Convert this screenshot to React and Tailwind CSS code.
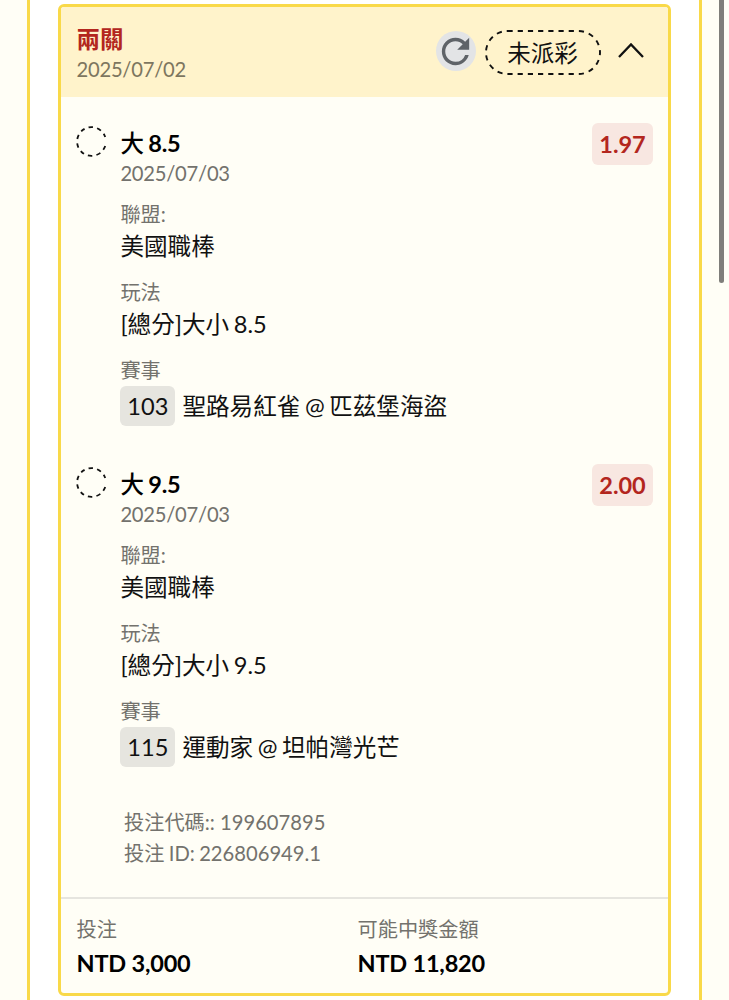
import React from 'react';
import { MdRefresh } from 'react-icons/md';

const legs = [
  {
    pick: '大',
    line: '8.5',
    date: '2025/07/03',
    odds: '1.97',
    league: '美國職棒',
    play: '[總分]大小 8.5',
    gameNo: '103',
    match: '聖路易紅雀 @ 匹茲堡海盜',
  },
  {
    pick: '大',
    line: '9.5',
    date: '2025/07/03',
    odds: '2.00',
    league: '美國職棒',
    play: '[總分]大小 9.5',
    gameNo: '115',
    match: '運動家 @ 坦帕灣光芒',
  },
];

const Field = ({ label, children }) => (
  <div className="mb-3">
    <p className="text-[20.2px] leading-[30px] text-[#73726d]">{label}</p>
    <div className="text-[23.6px] leading-[35px] pb-px">{children}</div>
  </div>
);

const Leg = ({ leg }) => (
  <section className="flex h-[341px] items-start">
    <svg className="mt-[13px] shrink-0" width="31" height="31" viewBox="0 0 31 31" fill="none">
      <path d="M29.2 19.95A14.4 14.4 0 1 1 29.2 11.05" stroke="#111" strokeWidth="1.8" strokeDasharray="4.4 4.15" />
    </svg>
    <div className="ml-[13.4px] mt-[15px] flex-1">
      <h3 className="text-[23.5px] leading-[30px] font-medium text-black">
        {leg.pick} <span className="font-bold tracking-[-0.3px]">{leg.line}</span>
      </h3>
      <p className="mb-[11px] text-[20.2px] leading-[30px] tracking-[-0.25px] text-[#73726d]">{leg.date}</p>
      <Field label="聯盟:">{leg.league}</Field>
      <Field label="玩法">{leg.play}</Field>
      <Field label="賽事">
        <div className="flex items-center gap-[7px] pt-px">
          <span className="h-10 w-[55px] rounded-md bg-[#e6e5df] text-center leading-[41px]">{leg.gameNo}</span>
          <span className="leading-10">{leg.match}</span>
        </div>
      </Field>
    </div>
    <span className="mt-[10px] h-[42px] w-[61px] rounded-md bg-[#f8e7e1] text-center text-[23.5px] leading-[43px] font-bold text-[#b3261e]">
      {leg.odds}
    </span>
  </section>
);

const App = () => {
  return (
    <div className="relative h-[1000px] w-[729px] overflow-hidden bg-[#fffef6] font-['Lato','Noto_Sans_CJK_TC',sans-serif] text-[#111] [word-spacing:-1.5px]">
      <div className="ml-[27px] h-full w-[675px] border-x-[3px] border-[#f9d949] bg-white px-7 pt-1">
        <article className="h-[992px] overflow-hidden rounded-md border-[3px] border-[#f9d949] bg-[#fffef6]">
          {/* Ticket header */}
          <header className="flex h-[90px] items-start bg-[#fff3cb] pl-[15.5px] pr-[23.5px]">
            <div className="mt-[17px] flex-1">
              <h2 className="text-[23.5px] leading-[30px] font-bold text-[#b3261e]">兩關</h2>
              <p className="text-[20.2px] leading-[30px] tracking-[-0.25px] text-[#7d765f]">2025/07/02</p>
            </div>
            <button className="mt-6 flex size-10 items-center justify-center rounded-full bg-[#e3e4e6] text-[#5f6368]">
              <MdRefresh className="size-[41px] shrink-0" />
            </button>
            <div className="relative mt-[23px] ml-[9px] h-[45px] w-[116px] text-center text-[23.5px] leading-[46px]">
              <svg className="absolute inset-0" width="116" height="45" viewBox="0 0 116 45" fill="none">
                <rect x="1" y="1" width="114" height="43" rx="21.5" stroke="#111" strokeWidth="1.9" strokeDasharray="5.2 5" />
              </svg>
              未派彩
            </div>
            <svg className="mt-[34px] ml-4" width="28" height="20" viewBox="0 0 28 20" fill="none">
              <path d="M2 16 14 3.5 26 16" stroke="#111" strokeWidth="2.3" />
            </svg>
          </header>

          {/* Selections */}
          <div className="px-[15px] pt-4">
            {legs.map((leg) => (
              <Leg key={leg.gameNo} leg={leg} />
            ))}
          </div>

          {/* Ticket codes */}
          <div className="h-[102px] pl-[63px] pt-[12px] text-[20.2px] leading-[30.5px] text-[#73726d]">
            <p className="[word-spacing:0px]">投注代碼:: 199607895</p>
            <p className="[word-spacing:-0.8px]">投注 ID: 226806949.1</p>
          </div>

          <footer className="flex border-t-2 border-[#e6e5df] pl-[15.5px] pt-[15px] [word-spacing:0px]">
            <div className="w-[281px]">
              <p className="text-[20.2px] leading-[30px] text-[#73726d]">投注</p>
              <p className="pt-px text-[23.5px] leading-9 font-bold tracking-[-0.2px] text-black">NTD 3,000</p>
            </div>
            <div>
              <p className="text-[20.2px] leading-[30px] text-[#73726d]">可能中獎金額</p>
              <p className="pt-px text-[23.5px] leading-9 font-bold tracking-[-0.2px] text-black">NTD 11,820</p>
            </div>
          </footer>
        </article>
      </div>

      {/* Scroll thumb */}
      <div className="absolute top-0 right-[5px] h-[283px] w-[5px] rounded-b-full bg-[#7f7e7a]" />
    </div>
  );
};

export default App;
